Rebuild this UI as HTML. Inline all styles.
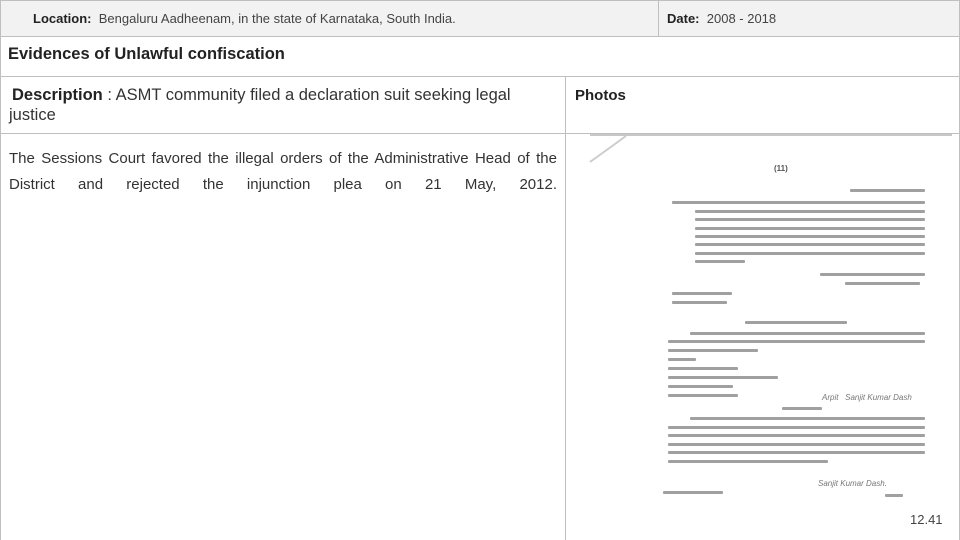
<!DOCTYPE html>
<html><head><meta charset="utf-8"><style>
*{margin:0;padding:0;box-sizing:border-box}
body{width:960px;height:540px;background:#fff;font-family:"Liberation Sans",sans-serif;color:#222;position:relative;overflow:hidden}
.a{position:absolute;white-space:nowrap}
.hl{position:absolute;height:1px;background:#bfbfbf}
.vl{position:absolute;width:1px;background:#bfbfbf}
.b{position:absolute;height:3px;background:#a0a0a0;border-radius:1px}
.j{text-align:justify;text-align-last:justify;white-space:normal}
</style></head><body>
<div class="a" style="left:0;top:0;width:960px;height:36px;background:#f2f2f2"></div>
<div class="hl" style="left:0;top:0;width:960px"></div>
<div class="hl" style="left:0;top:36px;width:960px"></div>
<div class="hl" style="left:0;top:76px;width:960px"></div>
<div class="hl" style="left:0;top:133px;width:960px"></div>
<div class="vl" style="left:0;top:0;height:540px"></div>
<div class="vl" style="left:959px;top:0;height:540px"></div>
<div class="vl" style="left:658px;top:0;height:36px"></div>
<div class="vl" style="left:565px;top:76px;height:464px"></div>

<div class="a" style="left:33px;top:11px;font-size:13px"><b>Location:</b>&nbsp; <span style="color:#444">Bengaluru Aadheenam, in the state of Karnataka, South India.</span></div>
<div class="a" style="left:667px;top:11px;font-size:13px"><b>Date:</b>&nbsp; <span style="color:#444">2008 - 2018</span></div>
<div class="a" style="left:8px;top:45px;font-size:16.5px;font-weight:bold">Evidences of Unlawful confiscation</div>
<div class="a" style="left:12px;top:86px;font-size:16.5px;color:#333"><b style="color:#222">Description</b> : ASMT community filed a declaration suit seeking legal</div>
<div class="a" style="left:9px;top:106px;font-size:16.5px;color:#333">justice</div>
<div class="a" style="left:575px;top:87px;font-size:15px;font-weight:bold">Photos</div>
<div class="a j" style="left:9px;top:149px;width:548px;font-size:15px;line-height:20px;color:#333">The Sessions Court favored the illegal orders of the Administrative Head of the</div>
<div class="a j" style="left:9px;top:175px;width:548px;font-size:15px;line-height:20px;color:#333">District and rejected the injunction plea on 21 May, 2012.</div>

<div class="a" style="left:590px;top:134px;width:362px;height:2px;background:#c8c8c8"></div>
<svg class="a" style="left:588px;top:134px" width="40" height="30"><path d="M2 28 L38 2" stroke="#ccc" stroke-width="2"/></svg>
<div class="a" style="left:774px;top:164px;font-size:8px;color:#555;font-weight:bold">(11)</div>
<div class="b" style="left:850px;top:189px;width:75px"></div>
<div class="b" style="left:672px;top:201px;width:253px"></div>
<div class="b" style="left:695px;top:210px;width:230px"></div>
<div class="b" style="left:695px;top:218px;width:230px"></div>
<div class="b" style="left:695px;top:227px;width:230px"></div>
<div class="b" style="left:695px;top:235px;width:230px"></div>
<div class="b" style="left:695px;top:243px;width:230px"></div>
<div class="b" style="left:695px;top:252px;width:230px"></div>
<div class="b" style="left:695px;top:260px;width:50px"></div>
<div class="b" style="left:820px;top:273px;width:105px"></div>
<div class="b" style="left:845px;top:282px;width:75px"></div>
<div class="b" style="left:672px;top:292px;width:60px"></div>
<div class="b" style="left:672px;top:301px;width:55px"></div>
<div class="b" style="left:745px;top:321px;width:102px"></div>
<div class="b" style="left:690px;top:332px;width:235px"></div>
<div class="b" style="left:668px;top:340px;width:257px"></div>
<div class="b" style="left:668px;top:349px;width:90px"></div>
<div class="b" style="left:668px;top:358px;width:28px"></div>
<div class="b" style="left:668px;top:367px;width:70px"></div>
<div class="b" style="left:668px;top:376px;width:110px"></div>
<div class="b" style="left:668px;top:385px;width:65px"></div>
<div class="b" style="left:668px;top:394px;width:70px"></div>
<div class="a" style="left:822px;top:393px;font-size:8px;color:#777;font-style:italic">Arpit &nbsp; Sanjit Kumar Dash</div>
<div class="b" style="left:782px;top:407px;width:40px"></div>
<div class="b" style="left:690px;top:417px;width:235px"></div>
<div class="b" style="left:668px;top:426px;width:257px"></div>
<div class="b" style="left:668px;top:434px;width:257px"></div>
<div class="b" style="left:668px;top:443px;width:257px"></div>
<div class="b" style="left:668px;top:451px;width:257px"></div>
<div class="b" style="left:668px;top:460px;width:160px"></div>
<div class="a" style="left:818px;top:479px;font-size:8px;color:#777;font-style:italic">Sanjit Kumar Dash.</div>
<div class="b" style="left:663px;top:491px;width:60px"></div>
<div class="b" style="left:885px;top:494px;width:18px"></div>

<div class="a" style="left:910px;top:512px;font-size:13px;color:#444">12.41</div>
</body></html>
